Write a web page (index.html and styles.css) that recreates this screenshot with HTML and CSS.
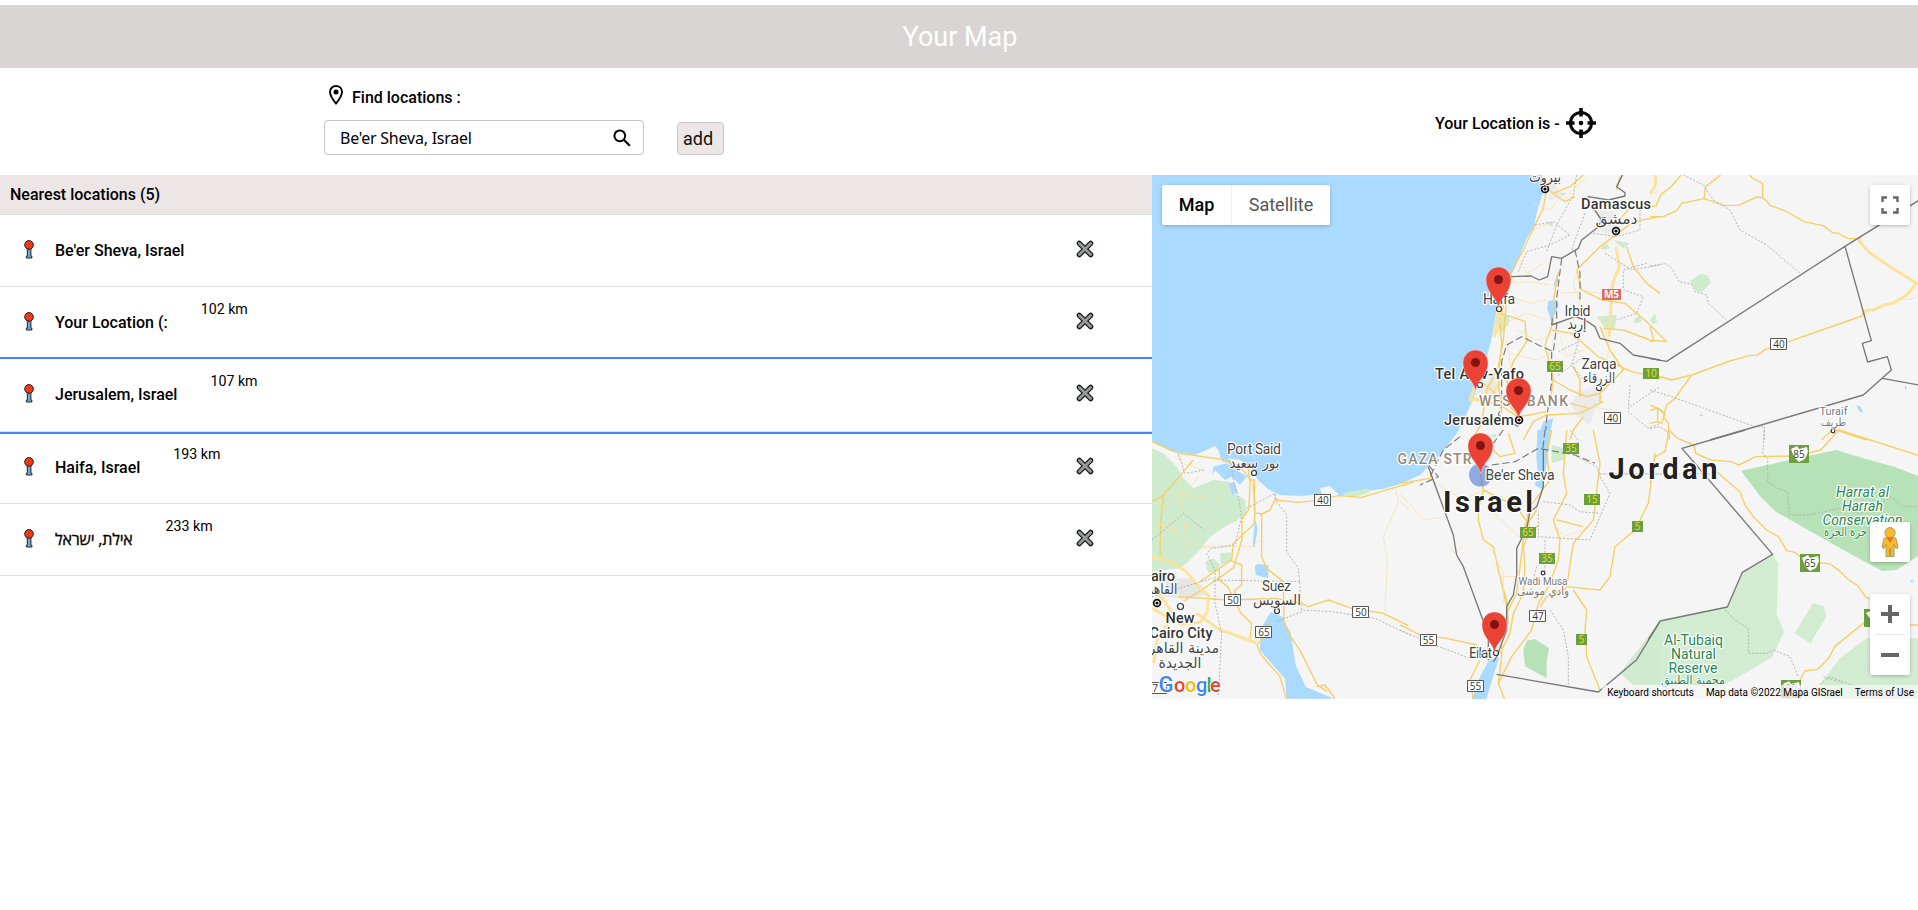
FILE: index.html
```html
<!DOCTYPE html>
<html lang="en">
<head>
<meta charset="utf-8">
<title>Your Map</title>
<link rel="stylesheet" href="styles.css">
</head>
<body>
<svg class="defs" width="0" height="0">
  <symbol id="tack" viewBox="0 0 10 19"><path d="M3.3 8h3.6v8.200h1v1.800H2.300v-1.800h1z" fill="#72a8d4" stroke="#222" stroke-width="1"/><circle cx="5" cy="4.900" r="4.300" fill="#f03a17" stroke="#2b1a16" stroke-width="1"/></symbol>
  <symbol id="cross" viewBox="0 0 18 18"><path d="M3.3 3.3l11.4 11.4M14.7 3.3L3.3 14.7" stroke="#171a22" stroke-width="5.2" stroke-linecap="round"/><path d="M3.4 3.4l11.2 11.2M14.6 3.4L3.4 14.6" stroke="#999" stroke-width="2.8" stroke-linecap="round"/></symbol>
</svg>
<header class="bar">Your Map</header>
<section class="tools">
  <div class="finder">
    <div class="label"><svg class="place" viewBox="0 0 14 20"><path d="M7 1C3.5 1 1 3.6 1 7c0 4.2 6 11.500 6 11.500S13 11.200 13 7c0-3.400-2.500-6-6-6z" fill="none" stroke="#000" stroke-width="1.900"/><circle cx="7" cy="7" r="2.500"/></svg><span>Find locations :</span></div>
    <div class="inputs">
      <div class="field"><span>Be'er Sheva, Israel</span><svg class="search" viewBox="0 0 18 18"><circle cx="6.800" cy="6.800" r="5.400" fill="none" stroke="#000" stroke-width="2"/><path d="M10.800 10.800l6 6" stroke="#000" stroke-width="2.300"/></svg></div>
      <button class="add">add</button>
    </div>
  </div>
  <div class="here">Your Location is - <svg class="target" viewBox="0 0 30 30"><g fill="none" stroke="#0a0a0a" stroke-width="3"><circle cx="15" cy="15" r="10.600"/><path d="M15 0v8.500M15 21.500V30M0 15h8.500M21.500 15H30" stroke-width="3.600"/></g><circle cx="15" cy="15" r="2.300"/></svg></div>
</section>
<main class="content">
  <section class="list">
    <h2>Nearest locations (5)</h2>
    <div class="row"><svg class="tack"><use href="#tack"/></svg><span class="name">Be'er Sheva, Israel</span><span class="km"></span><svg class="cross"><use href="#cross"/></svg></div>
    <div class="row"><svg class="tack"><use href="#tack"/></svg><span class="name">Your Location (:</span><span class="km">102 km</span><svg class="cross"><use href="#cross"/></svg></div>
    <div class="row active"><svg class="tack"><use href="#tack"/></svg><span class="name">Jerusalem, Israel</span><span class="km">107 km</span><svg class="cross"><use href="#cross"/></svg></div>
    <div class="row"><svg class="tack"><use href="#tack"/></svg><span class="name">Haifa, Israel</span><span class="km">193 km</span><svg class="cross"><use href="#cross"/></svg></div>
    <div class="row"><svg class="tack"><use href="#tack"/></svg><span class="name hebrew" dir="rtl">אילת, ישראל</span><span class="km">233 km</span><svg class="cross"><use href="#cross"/></svg></div>
  </section>
  <section class="map">
    <svg class="canvas" viewBox="1152 175 766 524">
      <defs>
        <g id="pin"><path d="M0 0c-1.500-11-12.500-15-12.500-28.500a12.500 12.500 0 0 1 25 0C12.500-15 1.500-11 0 0z" fill="#ea4335" stroke="#fff" stroke-opacity=".5" stroke-width=".6"/><circle cy="-28.500" r="4.500" fill="#811411"/></g>
      </defs>
      <path class="sea" d="M1152 175H1542L1544 190 1540 202 1537 212 1534 226 1526 240 1520 255 1514 270 1510 277 1502 284 1503 296 1497 306 1495 320 1492 337 1487 357 1478 387 1467 413 1457 433 1440 455 1420 475 1400 484 1383 489 1365 491 1340 496 1330 486 1320 488 1322 494 1300 496 1280 495 1268 489 1258 480 1253 470 1240 460 1225 458 1215 446 1195 455 1170 451 1152 441z"/>
      <!-- Nile delta and canal -->
      <g transform="translate(1150 430) scale(.33333)">
        <path class="park" d="M6 55L40 70 80 110 100 145 130 175 190 150 240 155 245 185 285 210 290 255 225 290 180 320 150 360 110 400 90 415 6 425zM165 395l25-10 20 20-5 15-30 10zM210 370l35-3v25l-32 12zM575 190l80-15 3 13-50 14z"/>
        <path fill="#e6e6e6" d="M50 445l60 0 45 20 10 30-70 12-50-10z"/>
        <path class="sea" d="M190 110l40-10 60 40-20 25-25-25-20 10-30-30-8 15zM205 60l50 45-40-12zM235 160l18-3 10 30-15 8zM325 402l30 3v40l-38-10-2-28zM315 265l8 30-10 60-5-10zM375 465l8 60 3 10zM500 155l40-15 30 3-45 12-20 5z"/>
        <path class="sea" d="M362 545l35 15 25 50 15 95 30 65 85 36H410l-5-60-75-85 3-65z"/>
        <path class="road" d="M6 35l80 35 60 8 70 10 60 30 25 30-5 90-20 30 0 60-25 85-100 70-50 30M310 160l5 100-5 25-60 55-5 50-95 65M130 90l-55 65-40 45-30 15M40 200l-8 80-2 95M295 100l3 50 15 0 2 100 20 0 0 130 15 35 50 40 2 120 20 45 30 45 50 100 30 20M330 255l30-15 15-30 70 7 50-5 70-15 70 5 100-30 55-15M208 415v35l25 20 40 80 32 30-5 50-40-10M245 393l30 12v60l-20 15v20M85 500l150 10 140-5 80 15 20 10 60-20 70 25 95 15 75 37M320 640l10 30 60 70 20 70M360 570l-10 40-25 30M500 770l25-5 30 40"/>
        <path class="highway" d="M6 382l50 10 50 30 45 55 25 20-5 50-20 30-60 5-90-50M140 550l70 50 60 20 50 20M6 480l35 30 30 45-50 75-10 70"/>
        <path class="minor" d="M20 275l135 75 90-5M50 190l170 15M30 300l90-10M80 65l20 35 60 20M155 355l90-5 60 0 25-20M735 165l10 50-45 105 12 70-8 170M745 210l35 30M90 140l20 220M6 160l80 60 60-80M6 300l70-40"/>
        <path class="dash" d="M240 90l10 60 15 50 10 60-20 85-70 10-15 15 25 50 0 100 20 90-10 190M290 235l85-45 5 25 30 40 0 110 35 50 10 125 90 5 130 20 105 50M375 190v20M190 450l265 5M455 545l-75 30M85 75l20 55 60-10M6 330l95-80 60 50M6 500l180-55"/>
      </g>
      <!-- Levant -->
      <g transform="translate(1400 170) scale(.33333)">
        <path class="park" d="M465 65l35 5-20 15-20-8zM290 430l35 5 5 20-25 35-10-25zM600 235l20-15 10 15-20 5zM590 440l60-5-5 40-25 5zM700 450l20-15 5 20-20 5zM640 210l50 10-20 15zM440 160l20-5-3 15zM750 450l15-20 5 25-10 8z"/>
        <path fill="#ebebeb" d="M235 610l40-5 20 45-30 35-40-10zM530 670l50-20 30 30-25 35-15 50-40-25-15-40zM590 120l50 5 20 50-40 20-25-20zM430 45l30-5 30 40-40 10z"/>
        <path class="sea" d="M445 393l20-4 12 12-15 40-10 10-10-35zM472 310l5 25-18 15zM430 755l30-10-15 65h-35z"/>
        <path class="highway" d="M648 230l10 60-20 50-5 60-5 100M280 500l30-50-15-30-10 70M250 600l-20 30-20 60 60-10 30-40"/>
        <path class="road" d="M550 15l-40 35-50 20-20-15-10 60-25 50-40 85-30 50-15 80-10 130-15 80-35 70-15 100-35 60M445 60l50 35 30-15M780 140l-80 15-40 30-60 45-50 50-20 20 15 60 60 30 70 10 70 60 55 55-50-5-80-30-60-5M680 230l20 60 40 50 40 30M475 305l-15 90 0 60-25 70 25 100-10 80M310 320l5 65-10 45 70 25 5 60-40 60-20 60 20 20 40 15M300 460l5 60-10 120 10 90M455 480l60 10 80 70 100 45 90 20M460 630l50 30 50 20 40-10 70-70-40-60-30-70M600 650l0 50-60 30-100 5-40 20-30 55M250 640l60 50 50 50 80-15M550 740l-30 40-10 30M660 20l-10 40M650 160l50-60M520 590l20 40 0 50M230 690l70 15 60 40M510 700l60 15 40-20"/>
        <path class="minor" d="M320 340l70-5 60 10M370 240l30-60 45-20M360 270l20 40 50-30M330 380l60 20 50-10M310 460l70-30 60 20M350 480l60 30 40-10M330 550l80 20 40-20M430 50l60 40 70-70M400 100l50 20 30-40M540 360l60 10 40-20M480 500l20 60 50-20M600 440l30 80-10 50M540 300l-20 40 20 60-30 80M480 370l60-5M465 680l50 50 60-20 60 10M320 510l20 130"/>
        <path class="dash" d="M530 15l-10 60-50 90-30 80M405 165l55-10 50 40-60 30-70 20-25 60M555 130l-30 80-10 30M580 190l70 10 70-20 0 -60M740 280l-70 20 0 60 60 20-20 50-60 20M475 545l60-30-20 70 40 50M690 645l-5 80 60 50 35-15M690 710l90-60M615 250l80 50 85-15M550 560l-80 60"/>
        <path class="border" d="M333 320l60-2 25 12 25-10 12-60 30 5 50-30 10-25 45-35 15-25-35-50-5-20 60 10 50-12 0-10-25-18 15-30 10-20M455 465l70-25 30 10 30 20 15 35 60 15 40 35 80 15M455 465l2-20"/>
        <path class="longdash" d="M485 265l-15 120 0 80-10 80-45-20-50-25-45 25-15 50 0 130-10 30 60 35M525 240l15 70 0 80M455 545v90l-15 110-5 65"/>
      </g>
      <!-- Eastern desert -->
      <g transform="translate(1650 170) scale(.33333)">
        <path class="park" d="M120 335l30-24 22 5 12 20-30 32-15-5zM2 450l12-15 7 20-10 7z"/>
        <path class="sea" d="M618 705l15 5 6 20-10-5zM148 738l6-8 5 8zM764 645l7 8-6 7z"/>
        <path class="road" d="M0 110l18-2 15-35 30-22 30-36M0 140h40l40-18 15-22 67-14 58 20 45 0 55-25 20 2 22 24 45 16 55 32 57 12 30 22 15 0 28 16 40 2M162 86l5-36 45-35M338 80v-40l-30-15-12-12M0 610l65 20 60-15 115-42 60-17 20 0 25-17 300-104M125 615l-50 70-25 20-10 35 15 20 3 50M0 705l25 10 20 15-10 30-12 -5-23 5M23 715v40M0 470l12 44H0M0 722l22-8 20 16M515 810l35-33 100 33"/>
        <path class="highway" d="M625 210l30 35 65 45 80 50-30 35-40 25-30 5-30 15-20 0-15 17M0 70l15-20 3-35"/>
        <path class="minor" d="M740 388l40 0 25-10M0 80l25-20"/>
        <path class="dash" d="M100 15l60 30 30 45 50 30 30 60 80 45 100 85M0 288l45-7 20 12 22 42 38 8 10 22 35 10 5 25 55 50M0 660l65 20 250 90 28 0v40M0 775l30-5 30 22"/>
        <path class="border" d="M0 566l50 8 535-345 220-137M585 229l79 283-27 8 16 56 59-16 12 40-84 75-460 135M697 625l108 20"/>
      </g>
      <g transform="translate(1650 430) scale(.33333)">
        <path class="park" d="M30 572l202-40 45-104 93-52 15 25-5 150 22 55-35 75-110 65-40 20H-50L-90 730zM434 610l55-90 32 8 8 32-48 80zM490 790l80-105 80-60h154v180H510z" opacity=".9"/>
        <path class="reserve" d="M273 122l285-62 100 30 75 20 71 28v240l-65 42-42 3-90-48-230-130-47-47z"/>
        <path class="sea" d="M783 449l7 2-2 7-6-2z"/>
        <path class="road" d="M0 160l15-80 30-15 12-65 25 25 50 20 5 25 45 20 60 5 25 10 50-25 120-2 75-18 55-60 250 80M200 125l70 60 15 40 25 35 40 40 35 20 25 42 25 5 30 25 75 10 28 20 25 25 30 20 25 35 60 20M804 585h-50l-50-20-60 12-35 28-55 45-15 30-35 38-40 5-15 30M45 0l12 8"/>
        <path class="dash" d="M343 0l-5 70 15 15 0 70 30 20 30 10 5 70 60 0 90-20 60 15 45-15 50-35 35 30 46 0M225 540l30 30 40 25 0 75 55 0 20-10 50 20 25 60M520 740l60 20M-80 132H180M500 770l40-30 90 35"/>
        <path class="border" d="M285 0L96 55l272 318-91 54-45 104-202 42-35 55"/>
      </g>
      <!-- Negev and southern Jordan -->
      <g transform="translate(1400 430) scale(.33333)">
        <path class="park" d="M270 15l20-5-5 15zM455 45l40 10-5 35-35 8zM780 580l-75 130 20 50 55 10z"/>
        <path class="reserve" d="M380 632l25-5 42 27-7 40 0 50-65-35-5-50z"/>
        <path class="sea" d="M412 0h42l-10 70-15 110-25-15 10-30-5-50zM268 688l30-5-18 55-22 72h-43l20-60z"/>
        <path class="road" d="M0 160l90-15 8-20M240 130l10 50-15 60 0 30 15 60 30 20 15 70 10 40 15 70 5 50M325 10l20 60-45 10-30-30M250 180l100 50 40 60M455 0l-15 70 10 80-60 80-15 60-15 120-10 80-30 60M580 0l20 100-20 170-60 70-20 130 100 10 30-40 15-90 60-50 40-80 20-150M415 285l-30 30-15 35 5 60-5 80-30 60-10 60-30 60M500 0l-10 130 10 60-40 80 20 60-5 60-30 80-30 50-20 80-60 80-40 80M500 475l-60 25-20 30M520 480l40 60-5 60 5 80 40 100M0 585l60 30 80 10 90 20M305 640l0 40-10 80 20 50M240 690l-30 60 10 60M470 270l80 20M300 440l25 90M410 240l-40 60"/>
        <path class="minor" d="M0 190l70 80 70-10M90 150l100 60 60-30M150 350l10 20 30-20M260 330l50 100 0 90M470 290l20 30 60-20M270 200l20 60 80 70M300 440h60"/>
        <path class="dash" d="M510 0l25 30-5 50 60 30 10 30 30 50-60 140-155-10 0-75M600 132h180M430 215l80 10 30 20 60 5M435 330l0 110M450 540l40 60 15 80 0 90M0 600l90 40 120 45M410 410l-20 80"/>
        <path class="border" d="M430 60l0 110-20 60-20 15-10 50-30 60 0 80-10 60-20 35 0 70-30 80-10 15M85 110l75 205 10 60 20 35 75 205 0 75M290 733l305 53 115-97 70-115"/>
        <path class="longdash" d="M275 105l70-10 70-40 110 20 60 25M180 20l-50 40-40 80M85 105l30 35-55 25M310 0l-30 40M435 0l-7 60"/>
      </g>

      <!-- Road shields -->
      <g class="shield"><path d="M1314.500 494.500h16v11h-16zM1224.500 594.500h16v11h-16zM1255.500 626.500h16v11h-16zM1352.500 606.500h16v11h-16zM1604.500 412.500h16v11h-16zM1770.500 338.500h16v11h-16zM1420.500 634.500h16v11h-16zM1467.500 680.500h16v11h-16zM1529.500 610.500h16v11h-16zM1150.500 682.500h16v11h-16z"/></g>
      <g class="shield-text"><text x="1323" y="503.500">40</text><text x="1233" y="603.500">50</text><text x="1264" y="635.500">65</text><text x="1361" y="615.500">50</text><text x="1612.500" y="421.500">40</text><text x="1779" y="347.500">40</text><text x="1428.500" y="643.500">55</text><text x="1475.500" y="689.500">55</text><text x="1538" y="619.500">47</text><text x="1155" y="691.500">7</text></g>
      <path fill="#6b9f3f" d="M1547 361h16v11h-16zM1643 368h16v11h-16zM1563 443h16v11h-16zM1584 494h16v11h-16zM1632 521h11v11h-11zM1520 527h16v11h-16zM1539 553h16v11h-16zM1576 634h11v11h-11zM1789 445h20v18h-20zM1800 554h20v18h-20zM1864 609h20v18h-20zM1781 680h20v18h-20z"/>
      <g class="green-text"><text x="1555" y="370">65</text><text x="1651" y="377">10</text><text x="1571" y="452">35</text><text x="1592" y="503">15</text><text x="1637.500" y="530">5</text><text x="1528" y="536">65</text><text x="1547" y="562">35</text><text x="1581.500" y="643">5</text></g>
      <path fill="#fff" d="M1791 449l6-3 2 3 8-2 1 5-3 7-6 3-5-5zM1802 558l6-3 2 3 8-2 1 5-3 7-6 3-5-5zM1866 613l6-3 5 3-1 12-5-5zM1783 684l6-3 2 3 8-2 1 5-3 7-6 3-5-5z"/>
      <g class="shield-text"><text x="1799" y="458">85</text><text x="1810" y="567">65</text><text x="1791" y="692" fill-opacity=".5">80</text></g>
      <path fill="#de6b6b" d="M1602 289h19v11h-19z"/><text x="1611.500" y="298" class="red-text">M5</text>

      <!-- City dots -->
      <g class="dots"><circle cx="1254" cy="473" r="2.500"/><circle cx="1277" cy="611" r="2.500"/><circle cx="1180.500" cy="606.500" r="3"/><circle cx="1499" cy="309" r="2.500"/><circle cx="1480" cy="385" r="2.500"/><circle cx="1577" cy="335" r="2.500"/><circle cx="1599" cy="388" r="2.500"/><circle cx="1833" cy="431" r="1.800"/><circle cx="1543" cy="573" r="1.800"/><circle cx="1496" cy="653" r="2.500"/></g>
      <g class="capitals"><circle cx="1545" cy="189" r="3.400"/><circle cx="1616" cy="231" r="3.400"/><circle cx="1157" cy="603" r="3.400"/><circle cx="1519" cy="420" r="3.400"/></g>
      <g><circle cx="1545" cy="189" r="1.600"/><circle cx="1616" cy="231" r="1.600"/><circle cx="1157" cy="603" r="1.600"/><circle cx="1519" cy="420" r="1.600"/></g>
      <circle cx="1480.500" cy="475" r="11.500" fill="#4a76d8" opacity=".6"/>

      <!-- Place names -->
      <g class="places">
        <g class="city"><text x="1254" y="454" textLength="54">Port Said</text><text x="1276.500" y="591" textLength="29">Suez</text><text x="1499" y="304" textLength="32">Haifa</text><text x="1577.500" y="316" textLength="26">Irbid</text><text x="1599" y="369" textLength="35">Zarqa</text><text x="1520" y="480" textLength="69">Be'er Sheva</text><text x="1480.500" y="658" textLength="23">Eilat</text></g>
        <g class="major"><text x="1616" y="209" textLength="70">Damascus</text><text x="1479.500" y="379" textLength="89">Tel Aviv-Yafo</text><text x="1479" y="425" textLength="70">Jerusalem</text><text x="1163" y="581" textLength="24">airo</text><text x="1180" y="623" textLength="29">New</text><text x="1181" y="638" textLength="63">Cairo City</text></g>
        <g class="arabic"><text x="1545" y="182" textLength="32" lengthAdjust="spacingAndGlyphs">بيروت</text><text x="1616.500" y="224" textLength="42" lengthAdjust="spacingAndGlyphs">دمشق</text><text x="1577" y="329" textLength="19" lengthAdjust="spacingAndGlyphs">إربد</text><text x="1599" y="383" textLength="32" lengthAdjust="spacingAndGlyphs">الزرقاء</text><text x="1254.500" y="468" textLength="50" lengthAdjust="spacingAndGlyphs">بور سعيد</text><text x="1277" y="605" textLength="48" lengthAdjust="spacingAndGlyphs">السويس</text><text x="1159" y="594" textLength="37" lengthAdjust="spacingAndGlyphs">القاهرة</text><text x="1180" y="653" textLength="78" lengthAdjust="spacingAndGlyphs">مدينة القاهرة</text><text x="1180" y="668" textLength="43" lengthAdjust="spacingAndGlyphs">الجديدة</text></g>
        <g class="small"><text x="1833.500" y="415" textLength="28">Turaif</text><text x="1833.500" y="426" textLength="25" lengthAdjust="spacingAndGlyphs" class="tiny">طريف</text><text x="1543" y="585" textLength="49" lengthAdjust="spacingAndGlyphs">Wadi Musa</text><text x="1543" y="595" textLength="52" lengthAdjust="spacingAndGlyphs" class="tiny">وادي موسى</text></g>
        <g class="region"><text x="1523.500" y="406" textLength="89">WEST BANK</text><text x="1434.500" y="464" textLength="74">GAZA STR</text></g>
        <g class="country"><text x="1488" y="512" textLength="90">Israel</text><text x="1663" y="479" textLength="109">Jordan</text></g>
        <g class="nature"><g class="slant"><text x="1862.500" y="497" textLength="53">Harrat al</text><text x="1862.500" y="511" textLength="41">Harrah</text><text x="1862.500" y="525" textLength="80">Conservation</text></g><text x="1845.500" y="536" class="tiny" textLength="43" lengthAdjust="spacingAndGlyphs">حرة الحرة</text><text x="1693.500" y="645" textLength="59">Al-Tubaiq</text><text x="1693.500" y="659" textLength="45">Natural</text><text x="1693" y="673" textLength="49">Reserve</text><text x="1693" y="684" class="tiny" textLength="64" lengthAdjust="spacingAndGlyphs">محمية الطبيق</text></g>
      </g>
      <use href="#pin" x="1498.500" y="308"/><use href="#pin" x="1475.500" y="391"/><use href="#pin" x="1518.500" y="419"/><use href="#pin" x="1480.500" y="474"/><use href="#pin" x="1494.500" y="653"/>
      <g class="google"><text y="692"><tspan x="1158.500" fill="#4285f4" font-size="22">G</tspan><tspan x="1174" fill="#ea4335">o</tspan><tspan x="1185" fill="#fbbc04">o</tspan><tspan x="1196" fill="#4285f4">g</tspan><tspan x="1206.500" fill="#34a853">l</tspan><tspan x="1210" fill="#ea4335">e</tspan></text></g>
    </svg>
    <div class="types"><button class="on">Map</button><button>Satellite</button></div>
    <button class="ctl full"><svg viewBox="0 0 18 18"><path d="M1.500 6V1.500H6M12 1.500h4.500V6M16.500 12v4.500H12M6 16.500H1.500V12" fill="none" stroke="#666" stroke-width="2.400"/></svg></button>
    <button class="ctl person"><svg viewBox="0 0 18 30"><path d="M3 11.500l3-1.500h6l3 1.500 2 9-2 1-2-4v12H9.500v-8h-1v8H5v-12l-2 4-2-1z" fill="#fbb92c" stroke="#9a8751" stroke-width=".8"/><circle cx="9" cy="5.700" r="5.100" fill="#fbb92c" stroke="#9a8751" stroke-width=".8"/><path d="M5.500 10.500h7L9 16z" fill="#e07b33"/></svg></button>
    <div class="zoom"><svg viewBox="0 0 40 81"><path d="M20 11v18M11 20h18M11 61h18" stroke="#666" stroke-width="4"/><path d="M5 40.500h30" stroke="#e6e6e6"/></svg></div>
    <div class="legal"><span>Keyboard shortcuts</span><span>Map data ©2022 Mapa GISrael</span><span>Terms of Use</span></div>
  </section>
</main>
</body>
</html>
```
FILE: styles.css
```css
* { box-sizing: border-box; }
body { margin: 0; padding-top: 5px; height: 910px; overflow: hidden; background: #fff; font-family: Roboto, "Liberation Sans", sans-serif; color: #000; }
.defs { position: absolute; }
button { font: inherit; margin: 0; }
.bar { height: 63px; padding: 1px 0 0 2px; background: #d9d5d4; color: #fff; font-size: 27px; line-height: 63px; text-align: center; }
.tools { height: 107px; display: flex; justify-content: space-between; align-items: flex-start; }
.finder { padding: 17px 0 0 324px; }
.label { display: flex; align-items: flex-start; gap: 9px; padding-left: 5px; height: 35px; font-size: 16px; font-weight: 500; line-height: 26px; }
.place { width: 14px; height: 20px; }
.inputs { display: flex; align-items: flex-end; gap: 33px; }
.field { width: 320px; height: 35px; border: 1px solid #c8c5c6; border-radius: 4px; display: flex; align-items: center; justify-content: space-between; padding: 0 12px 0 15px; font: 16px "Noto Sans", "Open Sans", sans-serif; letter-spacing: -.23px; }
.search { width: 18px; height: 18px; }
.add { width: 47px; height: 33px; border: 1px solid #cbc7c8; border-radius: 4px; background: #ece6e6; padding: 0 0 0 5px; text-align: left; font-size: 18px; line-height: 31px; color: #111; }
.here { width: 483px; display: flex; align-items: center; gap: 6px; padding-top: 40px; font-size: 16px; font-weight: 500; }
.target { width: 30px; height: 30px; }
.content { display: flex; }
.list { width: 1152px; }
.list h2 { margin: 0; height: 40px; padding-left: 10px; background: #ece6e6; border-bottom: 1px solid #ddd; font-size: 16px; font-weight: 500; line-height: 39px; }
.row { height: 72px; display: flex; align-items: flex-start; padding: 25px 58px 0 24px; border-bottom: 1px solid #ddd; }
.active { height: 73px; outline: 2px solid #4285f4; position: relative; clip-path: inset(-2px 0); }
.tack { width: 10px; height: 19px; }
.name { margin: 1px 33px 0 21px; font-size: 16px; font-weight: 500; line-height: 19px; }
.hebrew { font-family: "Open Sans", "Liberation Sans", sans-serif; font-weight: 400; letter-spacing: -.2px; -webkit-text-stroke: .3px #000; }
.km { flex: 1; margin-top: -12px; font-size: 14.200px; line-height: 18px; }
.cross { width: 18px; height: 18px; }
.map { position: relative; width: 766px; height: 524px; overflow: hidden; background: #f5f5f5; }
.canvas { display: block; width: 766px; height: 524px; }
.sea { fill: #aadaff; }
.park { fill: #ceebce; }
.reserve { fill: #b7e2b7; }
.road, .highway, .minor, .dash, .border, .longdash { fill: none; stroke-linejoin: round; }
.road { stroke: #f6cf65; stroke-width: 4.200; }
.highway { stroke: #fce39b; stroke-width: 9; }
.minor { stroke: #f8e2a8; stroke-width: 2.400; }
.dash { stroke: #aaa; stroke-width: 2.600; stroke-dasharray: 6 5; }
.border { stroke: #777; stroke-width: 4; }
.longdash { stroke: #777; stroke-width: 3.400; stroke-dasharray: 22 10; }
.shield { fill: #fff; stroke: #555; }
.shield-text, .green-text, .red-text { font: 10px "Open Sans", sans-serif; text-anchor: middle; fill: #333; }
.green-text { fill: #e9e219; }
.red-text { fill: #fff; font-weight: 700; }
.dots { fill: #fff; stroke: #333; stroke-width: 1.200; }
.capitals { fill: #fff; stroke: #111; stroke-width: 1.700; }
.places { text-anchor: middle; fill: #444; stroke: #fff; stroke-width: 2.500; stroke-linejoin: round; font-size: 14px; }
.places text { paint-order: stroke; }
.major { font-size: 14.500px; font-weight: 500; fill: #333; }
.arabic { font: 14.500px "DejaVu Sans", sans-serif; stroke-width: 2; }
.small { font-size: 11px; fill: #777; }
.region { font-size: 14px; font-weight: 500; fill: #958a78; }
.country { font-size: 29px; font-weight: 700; fill: #222; }
.nature { fill: #278750; font-size: 14px; }
.slant { font-style: italic; }
.tiny { font: 11.500px "DejaVu Sans", sans-serif; stroke-width: 1.600; }
.google { font: 500 20px Roboto, sans-serif; stroke: #fff; stroke-width: 2; }
.google text { paint-order: stroke; }
.types { position: absolute; left: 10px; top: 10px; display: flex; height: 40px; border-radius: 2px; background: #fff; box-shadow: 0 1px 4px -1px rgba(0,0,0,.4); }
.types button { width: 99px; border: 0; border-left: 1px solid #eee; background: none; font-size: 18px; padding: 0 0 2px; color: #565656; }
.types .on { width: 69px; border: 0; font-weight: 500; color: #000; }
.ctl, .zoom { position: absolute; right: 8px; width: 40px; height: 40px; border: 0; border-radius: 2px; background: #fff; box-shadow: 0 1px 4px -1px rgba(0,0,0,.4); padding: 0; display: grid; place-items: center; }
.full { top: 10px; }
.full svg { width: 18px; height: 18px; }
.person { top: 347px; }
.person svg { width: 18px; height: 30px; }
.zoom { top: 419px; height: 81px; }
.zoom svg { width: 40px; height: 81px; }
.legal { position: absolute; right: 0; bottom: 0; height: 14px; display: flex; gap: 12px; padding: 0 4px 0 5px; background: rgba(245,245,245,.75); font-size: 10px; line-height: 15px; white-space: nowrap; }
```
